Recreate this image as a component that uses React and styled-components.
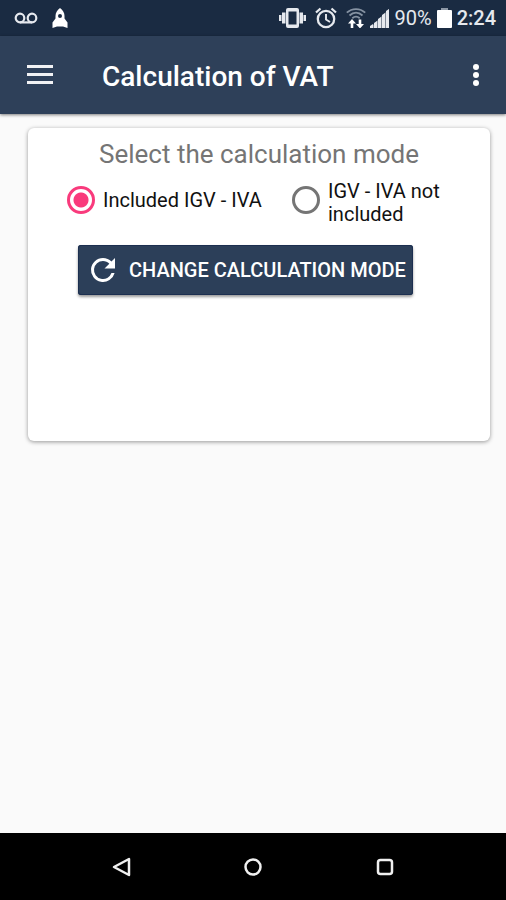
import React, { useState } from "react";
import styled, { createGlobalStyle } from "styled-components";

const GlobalStyle = createGlobalStyle`
  *, *::before, *::after { box-sizing: border-box; }
  body {
    margin: 0;
    background: #fafafa;
    font-family: Roboto, "Liberation Sans", sans-serif;
  }
`;

const Screen = styled.div`
  min-height: 100vh;
  display: flex;
  flex-direction: column;
`;

const StatusBar = styled.div`
  height: 36px;
  padding: 0 10px 0 14px;
  display: flex;
  align-items: center;
  justify-content: space-between;
  background: #1a2b42;
  color: #e6e9ee;
`;

const StatusGroup = styled.div`
  display: flex;
  align-items: center;
  gap: ${(p) => p.$gap}px;
  svg { display: block; flex: none; }
`;

const StatusText = styled.span`
  font-size: 20px;
  line-height: 24px;
  font-weight: ${(p) => (p.$strong ? 500 : 400)};
`;

const AppBar = styled.header`
  height: 78px;
  padding: 0 16px 0 26px;
  display: flex;
  align-items: center;
  background: #2e4059;
  color: #fff;
  box-shadow: 0 1px 3px rgba(0, 0, 0, 0.5);
`;

const IconButton = styled.button`
  width: 28px;
  height: 40px;
  padding: 0;
  border: 0;
  background: none;
  color: inherit;
  display: flex;
  align-items: center;
  justify-content: center;
`;

const Title = styled.h1`
  flex: 1;
  margin: 4px 0 0 48px;
  font-size: 28px;
  line-height: 36px;
  font-weight: 500;
`;

const Content = styled.main`
  flex: 1;
  padding: 14px 16px 14px 28px;
`;

const Card = styled.section`
  min-height: 313px;
  padding: 8px 36px 16px;
  border-radius: 6px;
  background: #fff;
  box-shadow: 0 1px 4px rgba(0, 0, 0, 0.4);
  display: flex;
  flex-direction: column;
  align-items: flex-start;
`;

const ModeGroup = styled.fieldset`
  width: 100%;
  margin: 0;
  padding: 0;
  border: 0;
  display: grid;
  grid-template-columns: 225px 1fr;
`;

const Legend = styled.legend`
  width: 100%;
  padding: 0;
  font-size: 26px;
  line-height: 36px;
  text-align: center;
  color: #757575;
`;

const Option = styled.label`
  height: 56px;
  display: flex;
  align-items: center;
  gap: 8px;
  font-size: 20px;
  line-height: 23px;
  color: #111;
`;

const OptionText = styled.span`
  padding-top: ${(p) => (p.$wrapped ? 6 : 1)}px;
`;

const Radio = styled.input`
  appearance: none;
  flex: none;
  width: 28px;
  height: 28px;
  margin: 0 0 0 3px;
  border: 3px solid #757575;
  border-radius: 50%;
  &:checked {
    border-color: #f93a7c;
    background: radial-gradient(circle, #f93a7c 0 7px, transparent 8px);
  }
`;

const ChangeButton = styled.button`
  height: 50px;
  margin: 17px 0 0 14px;
  padding: 0 7px;
  border: 0;
  border-radius: 3px;
  background: #2c3f59;
  box-shadow: inset 0 0 0 1px #1c2f50, 0 2px 3px rgba(0, 0, 0, 0.4);
  color: #fff;
  display: flex;
  align-items: center;
  gap: 8px;
  font-family: inherit;
  font-size: 20px;
  line-height: 24px;
  font-weight: 500;
  white-space: nowrap;
`;

const NavBar = styled.nav`
  height: 67px;
  padding: 0 11%;
  display: grid;
  grid-template-columns: repeat(3, 1fr);
  align-items: center;
  justify-items: center;
  background: #000;
  color: #f0f0f0;
`;

const Voicemail = () => (
  <svg width="24" height="12" viewBox="0 0 24 12" fill="none" stroke="currentColor" strokeWidth="2.2">
    <circle cx="6" cy="6" r="4.3" />
    <circle cx="18" cy="6" r="4.3" />
    <path d="M6 10.4h12" />
  </svg>
);

const Rocket = () => (
  <svg width="16" height="20" viewBox="0 0 16 20" fill="#fff">
    <path
      fillRule="evenodd"
      d="M8 0C11 2 12.500 5 12.500 8v2.600l3 3.900V20L11 18.400H5L.5 20v-5.500l3-3.900V8C3.500 5 5 2 8 0zm0 6a2 2 0 1 0 0 4 2 2 0 0 0 0-4z"
    />
  </svg>
);

const Vibrate = () => (
  <svg width="27" height="20" viewBox="0 0 27 20" fill="currentColor">
    <path fillRule="evenodd" d="M9 0h9a2 2 0 0 1 2 2v16a2 2 0 0 1-2 2H9a2 2 0 0 1-2-2V2a2 2 0 0 1 2-2zm.5 3.500v13h8v-13z" />
    <path d="M3 4.500h3.500v11H3zM0 7h2.500v6H0zM20.500 4.500H24v11h-3.500zM24.500 7H27v6h-2.500z" />
  </svg>
);

const Alarm = () => (
  <svg width="22" height="22" viewBox="0 0 22 22" fill="none" stroke="currentColor" strokeWidth="2.300">
    <circle cx="11" cy="12" r="8.200" />
    <path d="M1 5.500l4.500-4M21 5.500l-4.500-4" />
    <path d="M11 7v5.500l4 2.500" strokeWidth="1.900" />
  </svg>
);

const Wifi = () => (
  <svg width="20" height="20" viewBox="0 0 20 20" fill="none">
    <g stroke="#8592a2" strokeWidth="1.800">
      <path d="M.8 4.700C6-.2 14-.2 19.200 4.700" />
      <path d="M3.500 7.500c4-3.700 9-3.700 13 0" />
      <path d="M6.300 10.300c2.400-2.100 5-2.100 7.400 0" />
    </g>
    <path fill="#fff" d="M6 11l4 4.500H7.300V20H4.700v-4.500H2zM14 20.500l-4-4.500h2.700v-4.500h2.600V16H18z" />
  </svg>
);

const Signal = () => (
  <svg width="19" height="19" viewBox="0 0 19 19" fill="currentColor">
    <path d="M0 19L19 0v19z" opacity="0.5" />
    <path d="M0 17l3-2v4H0zM4 14l3-2v7H4zM8 10l3-2v11H8zM12 6l3-2v15h-3zM16 2l3-2v19h-3z" />
  </svg>
);

const Battery = () => (
  <svg width="15" height="20" viewBox="0 0 15 20">
    <path d="M4 0h7v2H4z" fill="#8d98a6" />
    <rect y="2" width="15" height="18" rx="1" fill="#fff" />
  </svg>
);

const Menu = () => (
  <svg width="28" height="20" viewBox="0 0 28 20" fill="#f1f2f4">
    <path d="M1 0h26v3H1zM1 8h26v3H1zM1 16h26v3H1z" />
  </svg>
);

const More = () => (
  <svg width="8" height="24" viewBox="0 0 8 24" fill="currentColor">
    <circle cx="4" cy="4" r="3" />
    <circle cx="4" cy="12" r="3" />
    <circle cx="4" cy="20" r="3" />
  </svg>
);

const Refresh = () => (
  <svg width="36" height="36" viewBox="0 0 24 24" fill="currentColor">
    <path d="M17.650 6.350A7.960 7.960 0 0 0 12 4a8 8 0 1 0 7.730 10h-2.080A6 6 0 1 1 12 6c1.660 0 3.140.69 4.220 1.780L13 11h7V4z" />
  </svg>
);

const NavIcon = ({ children }) => (
  <svg width="20" height="20" viewBox="0 0 20 20" fill="none" stroke="currentColor" strokeWidth="2.500" strokeLinejoin="round">
    {children}
  </svg>
);

export default function App() {
  const [mode, setMode] = useState("included");
  return (
    <Screen>
      <GlobalStyle />
      <StatusBar>
        <StatusGroup $gap={14}>
          <Voicemail />
          <Rocket />
        </StatusGroup>
        <StatusGroup $gap={5}>
          <StatusGroup $gap={4}>
            <StatusGroup $gap={9}>
              <Vibrate />
              <Alarm />
              <Wifi />
            </StatusGroup>
            <Signal />
          </StatusGroup>
          <StatusText>90%</StatusText>
          <Battery />
          <StatusText $strong>2:24</StatusText>
        </StatusGroup>
      </StatusBar>

      <AppBar>
        <IconButton type="button" aria-label="Menu">
          <Menu />
        </IconButton>
        <Title>Calculation of VAT</Title>
        <IconButton type="button" aria-label="More options">
          <More />
        </IconButton>
      </AppBar>

      <Content>
        <Card>
          <ModeGroup>
            <Legend>Select the calculation mode</Legend>
            <Option>
              <Radio type="radio" name="mode" checked={mode === "included"} onChange={() => setMode("included")} />
              <OptionText>Included IGV - IVA</OptionText>
            </Option>
            <Option>
              <Radio type="radio" name="mode" checked={mode === "excluded"} onChange={() => setMode("excluded")} />
              <OptionText $wrapped>IGV - IVA not included</OptionText>
            </Option>
          </ModeGroup>
          <ChangeButton
            type="button"
            onClick={() => setMode(mode === "included" ? "excluded" : "included")}
          >
            <Refresh />
            CHANGE CALCULATION MODE
          </ChangeButton>
        </Card>
      </Content>

      <NavBar>
        <IconButton type="button" aria-label="Back">
          <NavIcon>
            <path d="M18 2v16L3 10z" />
          </NavIcon>
        </IconButton>
        <IconButton type="button" aria-label="Home">
          <NavIcon>
            <circle cx="10" cy="10" r="7.500" />
          </NavIcon>
        </IconButton>
        <IconButton type="button" aria-label="Recent apps">
          <NavIcon>
            <rect x="3" y="3" width="14" height="14" rx="2.500" />
          </NavIcon>
        </IconButton>
      </NavBar>
    </Screen>
  );
}
